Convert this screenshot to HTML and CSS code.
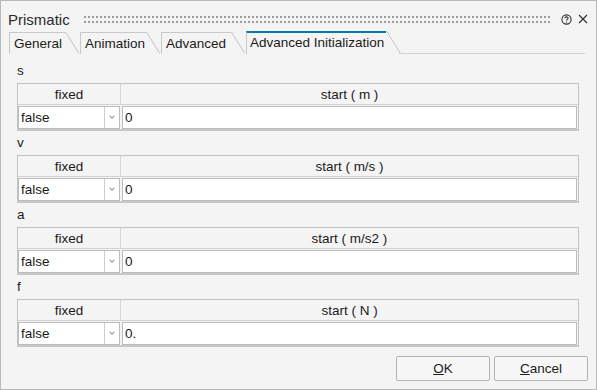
FILE: index.html
```html
<!DOCTYPE html>
<html lang="en">
<head>
    <meta charset="UTF-8">
    <meta name="viewport" content="width=device-width, initial-scale=1.0">
    <title>Prismatic</title>
    <link rel="stylesheet" href="styles.css">
</head>
<body>
    <div class="window">
        <div class="titlebar">
            <span class="title">Prismatic</span>
            <span class="grip"></span>
            <svg class="help" width="11" height="11" viewBox="0 0 11 11">
                <circle cx="5.5" cy="5.5" r="4.6" fill="none" stroke="#333" stroke-width="1.1"/>
                <path d="M3.9 4.3 C3.9 2.4 7.1 2.4 7.1 4.2 C7.1 5.3 5.5 5.4 5.5 6.6" fill="none" stroke="#333" stroke-width="1.1"/>
                <circle cx="5.5" cy="8.1" r="0.7" fill="#333"/>
            </svg>
            <svg class="close" width="10" height="10" viewBox="0 0 10 10">
                <path d="M1 1 L9 9 M9 1 L1 9" stroke="#333" stroke-width="1.2"/>
            </svg>
        </div>

        <div class="tabs">
            <div class="tab tab-general">General</div>
            <div class="tab tab-animation">Animation</div>
            <div class="tab tab-advanced">Advanced</div>
            <div class="tab tab-init active">Advanced Initialization</div>
            <div class="tab-line"></div>
        </div>

        <div class="content">
            <div class="section">
                <div class="label">s</div>
                <div class="grid">
                    <div class="head head-fixed">fixed</div>
                    <div class="head">start ( m )</div>
                    <div class="cell"><div class="select"><span class="value">false</span><span class="arrow"></span></div></div>
                    <div class="cell"><div class="input">0</div></div>
                </div>
            </div>
            <div class="section">
                <div class="label">v</div>
                <div class="grid">
                    <div class="head head-fixed">fixed</div>
                    <div class="head">start ( m/s )</div>
                    <div class="cell"><div class="select"><span class="value">false</span><span class="arrow"></span></div></div>
                    <div class="cell"><div class="input">0</div></div>
                </div>
            </div>
            <div class="section">
                <div class="label">a</div>
                <div class="grid">
                    <div class="head head-fixed">fixed</div>
                    <div class="head">start ( m/s2 )</div>
                    <div class="cell"><div class="select"><span class="value">false</span><span class="arrow"></span></div></div>
                    <div class="cell"><div class="input">0</div></div>
                </div>
            </div>
            <div class="section">
                <div class="label">f</div>
                <div class="grid">
                    <div class="head head-fixed">fixed</div>
                    <div class="head">start ( N )</div>
                    <div class="cell"><div class="select"><span class="value">false</span><span class="arrow"></span></div></div>
                    <div class="cell"><div class="input">0.</div></div>
                </div>
            </div>
        </div>

        <div class="footer">
            <button class="btn"><u>O</u>K</button>
            <button class="btn"><u>C</u>ancel</button>
        </div>
    </div>
</body>
</html>
```

FILE: styles.css
```css
* {
    box-sizing: border-box;
    margin: 0;
    padding: 0;
}

body {
    font-family: 'Liberation Sans', Arial, sans-serif;
    font-size: 13.5px;
    color: #1b1b1b;
    background: #f4f4f4;
}

.window {
    width: 597px;
    height: 390px;
    border: 1px solid #b9b9b9;
    background: #f4f4f4;
    display: flex;
    flex-direction: column;
}

/* barre de titre */
.titlebar {
    height: 30px;
    display: flex;
    align-items: center;
    padding: 0 8px 0 7px;
}

.title {
    font-size: 15px;
    color: #2a2a2a;
    margin-top: 6px;
}

.grip {
    flex: 1;
    height: 7px;
    margin: 6px 11px 0 14px;
    background-image: radial-gradient(circle at 1px 1px, #9c9c9c 1px, transparent 1.3px);
    background-size: 4px 5px;
}

.help {
    margin-top: 6px;
}

.close {
    margin: 6px 0 0 6px;
}

/* onglets */
.tabs {
    display: flex;
    height: 23px;
    padding-left: 8px;
}

.tab {
    position: relative;
    height: 22px;
    margin-top: 1px;
    border-left: 1px solid #c9c9c9;
    border-top: 1px solid #c9c9c9;
    padding-left: 4px;
    line-height: 21px;
    white-space: nowrap;
    margin-right: 15px;
}

.tab::after {
    content: '';
    position: absolute;
    top: -1px;
    right: -1px;
    width: 1px;
    height: 25px;
    background: #c9c9c9;
    transform-origin: top;
    transform: rotate(-32deg);
}

.tab-general { width: 56px; }
.tab-animation { width: 66px; }
.tab-advanced { width: 70px; }

.tab-init {
    width: 140px;
    margin-top: 0;
    height: 23px;
    border-top: 2px solid #0a78a8;
    padding-left: 3px;
    line-height: 20px;
    margin-right: 0;
}

.tab-init::after {
    top: -2px;
    height: 26px;
}

.tab-line {
    flex: 1;
    margin: 0 11px 0 13px;
    border-bottom: 1px solid #d2d2d2;
}

/* contenu */
.content {
    padding: 9px 17px 0 16px;
    display: flex;
    flex-direction: column;
    gap: 4px;
}

.label {
    height: 20px;
    line-height: 16px;
}

.grid {
    display: grid;
    grid-template-columns: 103px 1fr;
    border: 1px solid #c2c2c2;
    border-bottom: 2px solid #c8c8c8;
    height: 48px;
}

.head {
    height: 21px;
    line-height: 21px;
    text-align: center;
    border-bottom: 1px solid #d2d2d2;
}

.head-fixed {
    border-right: 1px solid #d6d6d6;
}

.cell {
    padding: 1px 1px 0 0;
    height: 24px;
}

.cell + .cell {
    padding-left: 1px;
}

.select,
.input {
    height: 23px;
    background: #fff;
    border: 1px solid #bcbcbc;
    display: flex;
    align-items: center;
}

.value {
    flex: 1;
    padding-left: 2px;
}

.arrow {
    width: 15px;
    height: 100%;
    border-left: 1px solid #cfcfcf;
    position: relative;
}

.arrow::after {
    content: '';
    position: absolute;
    left: 5px;
    top: 7px;
    width: 3px;
    height: 3px;
    border-right: 1.5px solid #9a9a9a;
    border-bottom: 1.5px solid #9a9a9a;
    transform: rotate(45deg);
}

.input {
    padding-left: 2px;
}

/* boutons */
.footer {
    margin-top: auto;
    display: flex;
    justify-content: flex-end;
    gap: 4px;
    padding: 0 8px 8px 0;
}

.btn {
    width: 94px;
    height: 25px;
    font-family: 'Liberation Sans', Arial, sans-serif;
    font-size: 13.5px;
    color: #1b1b1b;
    background: #f7f7f7;
    border: 1px solid #b3b3b3;
    border-radius: 2px;
}
```
